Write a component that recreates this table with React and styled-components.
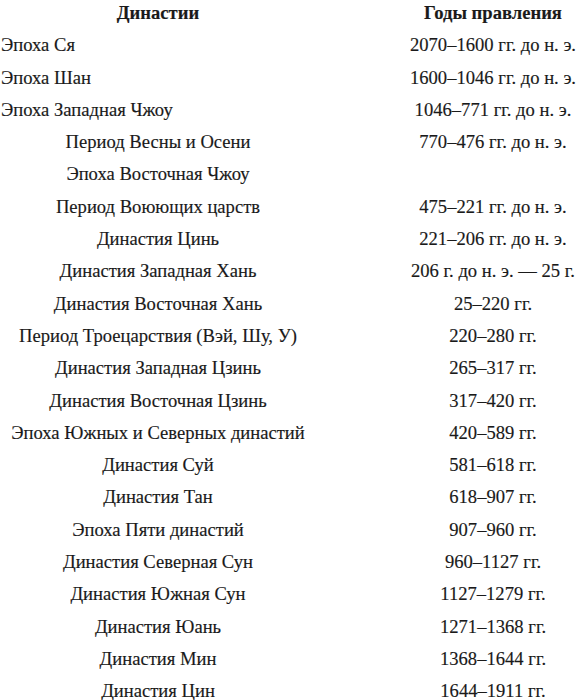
import React from "react";
import styled, { createGlobalStyle } from "styled-components";

const rows = [
  { name: "Эпоха Ся", years: "2070–1600 гг. до н. э.", left: true },
  { name: "Эпоха Шан", years: "1600–1046 гг. до н. э.", left: true },
  { name: "Эпоха Западная Чжоу", years: "1046–771 гг. до н. э.", left: true },
  { name: "Период Весны и Осени", years: "770–476 гг. до н. э." },
  { name: "Эпоха Восточная Чжоу", years: "" },
  { name: "Период Воюющих царств", years: "475–221 гг. до н. э." },
  { name: "Династия Цинь", years: "221–206 гг. до н. э." },
  { name: "Династия Западная Хань", years: "206 г. до н. э. — 25 г." },
  { name: "Династия Восточная Хань", years: "25–220 гг." },
  { name: "Период Троецарствия (Вэй, Шу, У)", years: "220–280 гг." },
  { name: "Династия Западная Цзинь", years: "265–317 гг." },
  { name: "Династия Восточная Цзинь", years: "317–420 гг." },
  { name: "Эпоха Южных и Северных династий", years: "420–589 гг." },
  { name: "Династия Суй", years: "581–618 гг." },
  { name: "Династия Тан", years: "618–907 гг." },
  { name: "Эпоха Пяти династий", years: "907–960 гг." },
  { name: "Династия Северная Сун", years: "960–1127 гг." },
  { name: "Династия Южная Сун", years: "1127–1279 гг." },
  { name: "Династия Юань", years: "1271–1368 гг." },
  { name: "Династия Мин", years: "1368–1644 гг." },
  { name: "Династия Цин", years: "1644–1911 гг." },
];

export default function App() {
  return (
    <>
      <GlobalStyle />
      <Table>
        <HeadCell>Династии</HeadCell>
        <HeadCell>Годы правления</HeadCell>
        {rows.map((row) => (
          <React.Fragment key={row.name}>
            <NameCell $left={row.left}>{row.name}</NameCell>
            <Cell>{row.years}</Cell>
          </React.Fragment>
        ))}
      </Table>
    </>
  );
}

const GlobalStyle = createGlobalStyle`
  html, body {
    margin: 0;
    padding: 0;
    background: #fff;
  }
  body {
    width: 578px;
    height: 700px;
    overflow: hidden;
  }
`;

const Table = styled.div`
  display: grid;
  grid-template-columns: 316px 170px;
  justify-content: space-between;
  margin-top: -3px;
  font-family: "Liberation Serif", "Times New Roman", serif;
  font-size: 18.6px;
  line-height: 32.3px;
  color: #1a1a1a;
  -webkit-text-stroke: 0.15px #1a1a1a;
`;

const Cell = styled.div`
  text-align: center;
  white-space: nowrap;
`;

const HeadCell = styled(Cell)`
  font-weight: bold;
`;

const NameCell = styled(Cell)`
  text-align: ${(p) => (p.$left ? "left" : "center")};
  padding-left: ${(p) => (p.$left ? "1px" : "0")};
`;
